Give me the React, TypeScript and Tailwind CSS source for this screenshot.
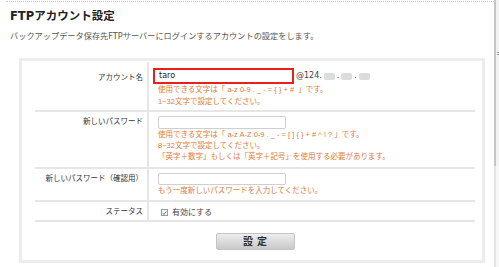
const font = { fontFamily: '"DejaVu Sans", "Noto Sans CJK JP", sans-serif' }
const noteFont = { fontFamily: '"Liberation Sans", "Noto Sans CJK JP", sans-serif' }

function Row({
  label,
  height,
  labelPt,
  children,
}: {
  label: string
  height: string
  labelPt: string
  children: React.ReactNode
}) {
  return (
    <div className={`flex border-b-2 border-[#e6e6e6] ${height}`}>
      <div
        className={`w-[114px] shrink-0 border-r-2 border-[#e6e6e6] pr-[4px] text-right text-[7.5px] leading-[11px] text-[#333] ${labelPt}`}
      >
        {label}
      </div>
      <div className="flex-1 pl-[9px]">{children}</div>
    </div>
  )
}

function Note({ children, tall }: { children: React.ReactNode; tall?: boolean }) {
  return (
    <div
      className={`text-[7.5px] text-[#e07b39] whitespace-pre ${tall ? 'leading-[12px]' : 'leading-[11px]'}`}
      style={noteFont}
    >
      {children}
    </div>
  )
}

function Blur() {
  return <span className="inline-block h-[7px] w-[11px] rounded-[2px] bg-[#dcdcdc] blur-[0.6px]" />
}

export default function App() {
  return (
    <div className="flex h-[267px] w-[499px] overflow-hidden bg-white" style={font}>
      <div className="w-[494px] shrink-0">
        <div className="ml-[6px] mt-[1px] border-t border-dotted border-[#c8c8c8]" />
        <h1 className="ml-[10px] mt-[7px] text-[11.5px] font-bold leading-[14px] text-[#222]">
          FTPアカウント設定
        </h1>
        <p className="ml-[10px] mt-[8px] text-[8.2px] leading-[11px] text-[#555]">
          バックアップデータ保存先FTPサーバーにログインするアカウントの設定をします。
        </p>

        <div className="ml-[19px] mt-[16px] h-[205px] w-[466px] border-[3px] border-[#ececec] pl-[13px] pr-[7px] pt-[1px]">
          <Row label="アカウント名" height="h-[50px]" labelPt="pt-[10px]">
            <div className="flex items-center pt-[6px]">
              <div className="ml-[-5px] flex h-[16px] w-[141px] items-center border-2 border-[#e8201c] pl-[4px] text-[8px] text-[#222]">
                taro
              </div>
              <div className="ml-[2px] flex items-center gap-[2px] text-[8px] text-[#444]">
                <span>@124.</span>
                <Blur />
                <span>.</span>
                <Blur />
                <span>.</span>
                <Blur />
              </div>
            </div>
            <Note tall>{'使用できる文字は「 a-z 0-9 . _ - = { } + #  」です。'}</Note>
            <Note tall>1~32文字で設定してください。</Note>
          </Row>

          <Row label="新しいパスワード" height="h-[57px]" labelPt="pt-[4px]">
            <div className="pt-[4px]">
              <div className="h-[13px] w-[128px] rounded-[2px] border border-[#cfcfcf] bg-white" />
            </div>
            <Note>{'使用できる文字は「 a-z A-Z 0-9 . _ - = [ ] { } + # ^ ! ? 」です。'}</Note>
            <Note>8~32文字で設定してください。</Note>
            <Note>「英字＋数字」もしくは「英字＋記号」を使用する必要があります。</Note>
          </Row>

          <Row label="新しいパスワード（確認用）" height="h-[33px]" labelPt="pt-[4px]">
            <div className="pt-[4px]">
              <div className="h-[12px] w-[128px] rounded-[2px] border border-[#cfcfcf] bg-white" />
            </div>
            <Note>もう一度新しいパスワードを入力してください。</Note>
          </Row>

          <Row label="ステータス" height="h-[20px]" labelPt="pt-[4px]">
            <div className="flex items-center pt-[5px] text-[8px] leading-[11px] text-[#444]">
              <span className="ml-[3px] flex h-[7px] w-[7px] items-center justify-center border border-[#9a9a9a] bg-[#f4f4f4]">
                <svg viewBox="0 0 8 8" className="h-[6px] w-[6px]">
                  <path d="M1.2 4.2 L3.2 6.2 L6.8 1.5" fill="none" stroke="#555" strokeWidth="1.2" />
                </svg>
              </span>
              <span className="ml-[4px]">有効にする</span>
            </div>
          </Row>

          <div className="mt-[11px] flex justify-center">
            <button className="flex h-[17px] w-[79px] items-center justify-center rounded-[2px] border border-[#c4c4c4] bg-gradient-to-b from-[#eeeeee] to-[#c9c9c9] pl-[4px] text-[10px] font-bold tracking-[4px] text-[#333]">
              設定
            </button>
          </div>
        </div>
      </div>

      <div className="flex w-[5px] flex-col">
        <div className="relative h-[166px] border-l-2 border-[#c6c6c6] bg-[#f2f2f2]">
          <div className="absolute left-[1px] top-[52px] h-[3px] w-[2px] border-y border-[#999]" />
        </div>
        <div className="flex-1 border-l-2 border-[#e6e6e6] bg-[#f7f7f7]" />
      </div>
    </div>
  )
}
